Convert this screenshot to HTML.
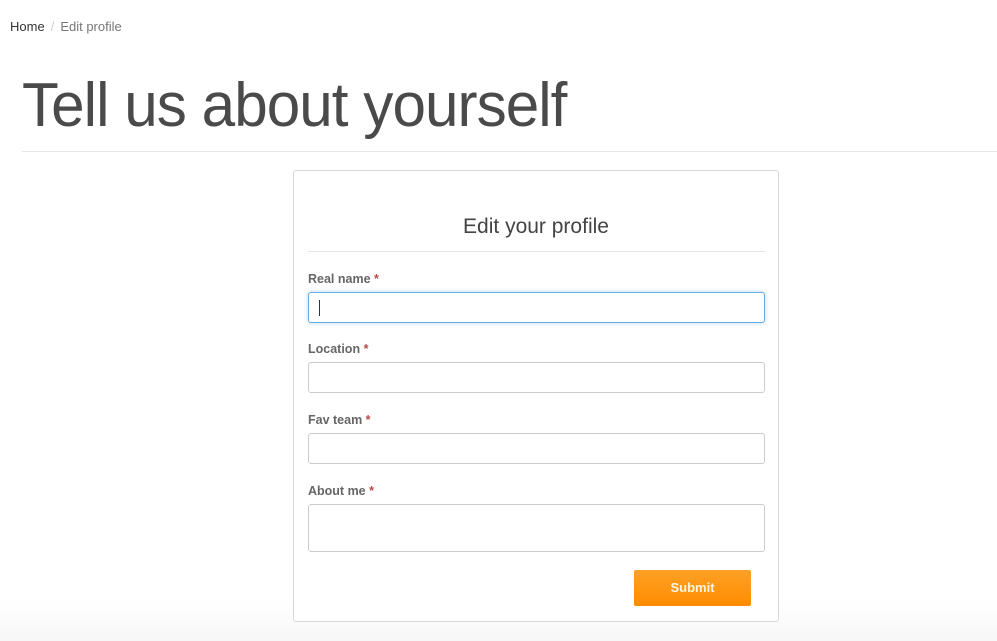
<!DOCTYPE html>
<html><head><style>
body{margin:0;width:997px;height:641px;background:#fff;font-family:"Liberation Sans",sans-serif;position:relative;overflow:hidden}
.bg{position:absolute;left:0;right:0;top:600px;bottom:0;background:linear-gradient(#fff,#f7f7f7)}
.bc{position:absolute;left:10px;top:19px;font-size:13px;color:#333}
.bc .s{color:#ccc;margin:0 6px}.bc .c{color:#777}
h1{position:absolute;left:22px;top:70px;margin:0;font-weight:normal;font-size:62px;color:#4a4a4a;white-space:nowrap;letter-spacing:-1px;transform-origin:left top}
.hr{position:absolute;left:22px;right:0;top:151px;border-top:1px solid #e5e5e5}
.card{position:absolute;left:293px;top:170px;width:484px;height:450px;border:1px solid #d6d6d6;border-radius:3px;background:#fff}
.ct{position:absolute;top:215px;text-align:center;font-size:21px;color:#444}
.hr2{position:absolute;left:308px;width:457px;top:251px;border-top:1px solid #e5e5e5}
.lb{position:absolute;left:308px;font-size:12.5px;font-weight:bold;color:#666}
.lb b{color:#b94a48}
.in{position:absolute;left:308px;width:455px;height:29px;border:1px solid #ccc;border-radius:3px;background:#fff}
.f{border-color:#66afe9;box-shadow:0 0 4px rgba(102,175,233,.5)}
.btn{position:absolute;left:634px;top:570px;width:117px;height:36px;background:linear-gradient(#ffa126,#ff8c00);border-radius:2px;color:#fff3e0;font-weight:bold;font-size:13px;text-align:center;line-height:36px}
</style></head><body>
<div class="bg"></div>
<div class="bc">Home<span class="s">/</span><span class="c">Edit profile</span></div>
<h1 id="t">Tell us about yourself</h1>
<div class="hr"></div>
<div class="card"></div>
<div class="ct" style="left:293px;width:486px">Edit your profile</div>
<div class="hr2"></div>
<div class="lb" style="top:272px">Real name <b>*</b></div>
<div class="in f" style="top:292px"><div style="position:absolute;left:10px;top:7px;width:1px;height:16px;background:#333"></div></div>
<div class="lb" style="top:342px">Location <b>*</b></div>
<div class="in" style="top:362px"></div>
<div class="lb" style="top:413px">Fav team <b>*</b></div>
<div class="in" style="top:433px"></div>
<div class="lb" style="top:484px">About me <b>*</b></div>
<div class="in" style="top:504px;height:46px"></div>
<div class="btn">Submit</div>
<script>var t=document.getElementById('t');t.style.transform='scaleX('+(544/t.offsetWidth)+')';</script>
</body></html>
